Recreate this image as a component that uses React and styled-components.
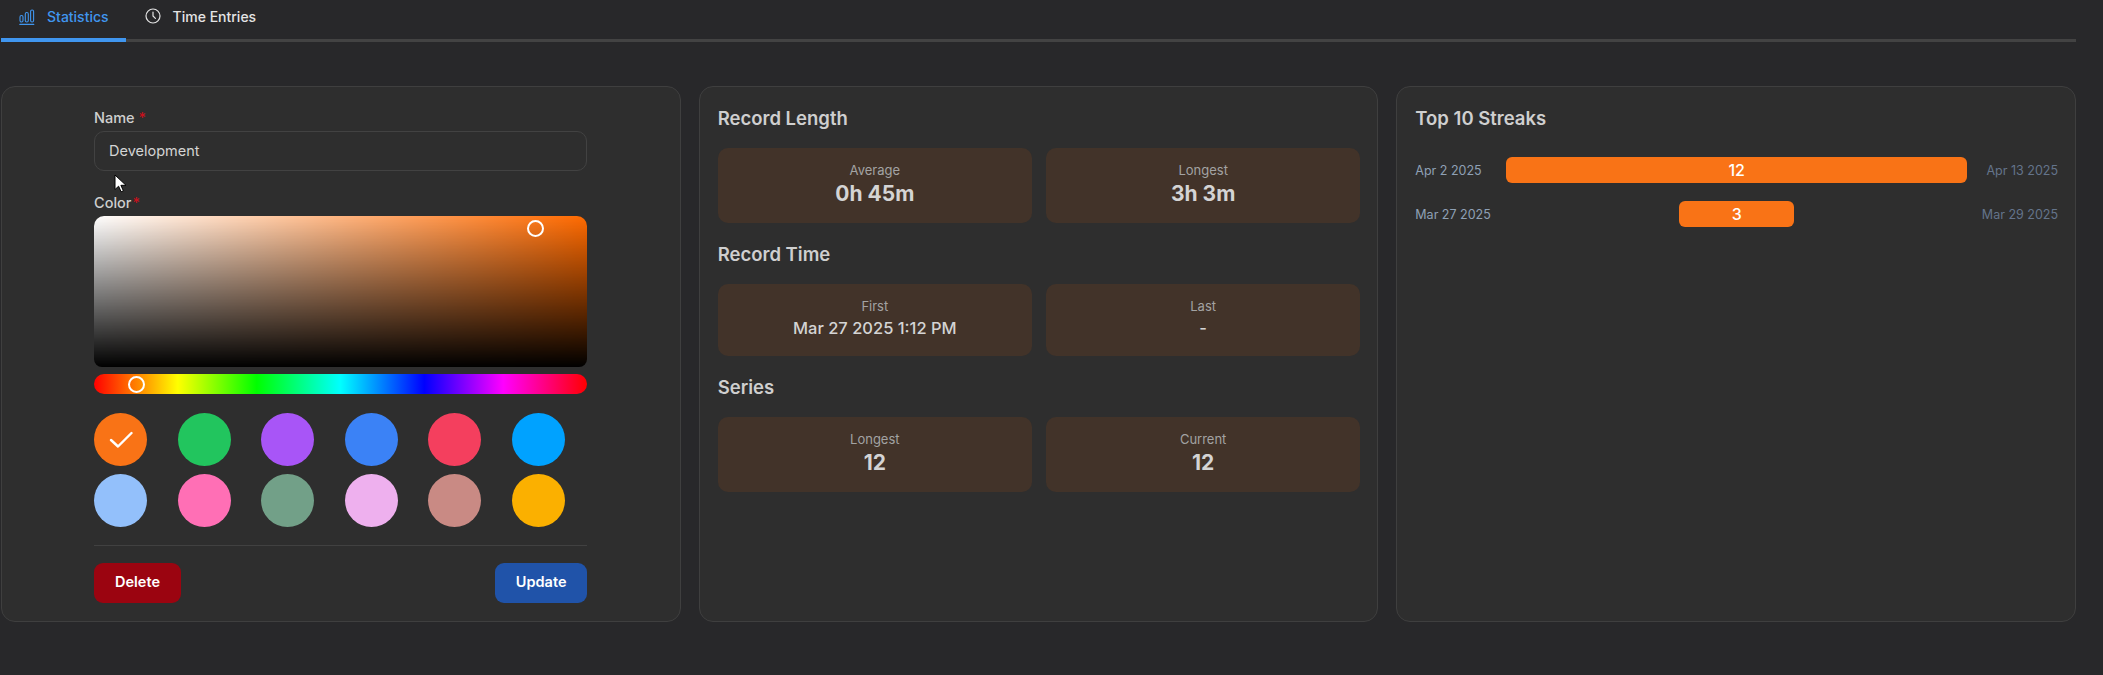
import React from 'react';
import styled, { createGlobalStyle } from 'styled-components';

const GlobalStyle = createGlobalStyle`
  html, body {
    margin: 0;
    background: #28282a;
    color: #d4d4d4;
    font-family: Inter, "Liberation Sans", sans-serif;
  }
  * { box-sizing: border-box; }
`;

const SWATCHES = [
  '#f97316', '#22c55e', '#a855f7', '#3b82f6', '#f43f5e', '#00a2ff',
  '#93c0fb', '#ff6fb5', '#72a088', '#eeb0ee', '#c98a84', '#fbb000',
];

const STREAKS = [
  { from: 'Apr 2 2025', to: 'Apr 13 2025', days: 12 },
  { from: 'Mar 27 2025', to: 'Mar 29 2025', days: 3 },
];

const ChartIcon = () => (
  <svg width="16" height="16" viewBox="0 0 16 16" fill="none" stroke="currentColor" strokeWidth="1.1">
    <rect x="1" y="6.5" width="3" height="6.5" rx="1.4" />
    <rect x="6.3" y="3.5" width="3" height="9.5" rx="1.4" />
    <rect x="11.6" y="1" width="3" height="12" rx="1.4" />
    <path d="M0.8 15.4h14" strokeLinecap="round" />
  </svg>
);

const ClockIcon = () => (
  <svg width="16" height="16" viewBox="0 0 16 16" fill="none" stroke="currentColor" strokeWidth="1.2" strokeLinecap="round" strokeLinejoin="round">
    <circle cx="8" cy="8" r="7" />
    <path d="M8 4v4l2.4 2.4" />
  </svg>
);

const Page = styled.div`
  position: relative;
  width: 2103px;
  height: 675px;
  padding: 0 27px 0 1px;
  overflow: hidden;
`;

const TabBar = styled.div`
  display: flex;
  height: 42px;
  border-bottom: 3px solid #434343;
`;

const Tab = styled.div`
  display: flex;
  align-items: center;
  gap: 12px;
  height: 42px;
  padding: ${(p) => (p.$active ? '0 17px 5px 18px' : '0 18px 10px 19px')};
  font-size: 14px;
  font-weight: 500;
  color: ${(p) => (p.$active ? '#4096ef' : '#e4e4e4')};
  border-bottom: ${(p) => (p.$active ? '4px solid #4096ef' : 'none')};
`;

const Cards = styled.div`
  display: grid;
  grid-template-columns: repeat(3, 1fr);
  gap: 18px;
  margin-top: 44px;
`;

const Card = styled.section`
  background: #2e2e2e;
  border: 1px solid #3f3f3f;
  border-radius: 14px;
  padding: ${(p) => p.$padding || '18px 17px 18px 18px'};
`;

const Label = styled.div`
  font-size: 14.5px;
  line-height: 20px;
  font-weight: 500;
  color: #cfcfcf;
  margin-bottom: 3px;
  span { color: #c8101c; margin-left: ${(p) => p.$starGap ?? 1}px; }
`;

const NameInput = styled.div`
  display: flex;
  align-items: center;
  height: 40px;
  padding: 0 14px 1px;
  margin-bottom: 22px;
  font-size: 14.5px;
  color: #d4d4d4;
  border: 1px solid #424242;
  border-radius: 10px;
`;

const Saturation = styled.div`
  position: relative;
  height: 151px;
  border-radius: 10px 10px 8px 8px;
  background:
    linear-gradient(to top, #000, rgba(0, 0, 0, 0)),
    linear-gradient(to right, #fff, #ff6a00);
`;

const Hue = styled.div`
  position: relative;
  height: 20px;
  margin-top: 7px;
  border-radius: 10px;
  background: linear-gradient(to right, #f00 0%, #ff0 17%, #0f0 33%, #0ff 50%, #00f 67%, #f0f 83%, #f00 100%);
`;

const Thumb = styled.i`
  position: absolute;
  left: ${(p) => p.$x}px;
  top: ${(p) => p.$y}px;
  width: 17px;
  height: 17px;
  border: 2px solid #fff;
  border-radius: 50%;
`;

const SwatchGrid = styled.div`
  display: grid;
  grid-template-columns: repeat(6, 53px);
  column-gap: 30.6px;
  row-gap: 8px;
  margin-top: 19px;
`;

const Swatch = styled.div`
  display: flex;
  align-items: center;
  justify-content: center;
  width: 53px;
  height: 53px;
  border-radius: 50%;
  background: ${(p) => p.$color};
`;

const Divider = styled.hr`
  height: 1px;
  margin: 18px 0 17px;
  border: 0;
  background: #414141;
`;

const Actions = styled.div`
  display: flex;
  justify-content: space-between;
`;

const Button = styled.div`
  display: flex;
  align-items: center;
  justify-content: center;
  width: ${(p) => p.$width}px;
  height: 40px;
  padding-bottom: 3px;
  font-size: 14.5px;
  font-weight: 600;
  color: #fff;
  background: ${(p) => p.$color};
  border-radius: 9px;
`;

const Heading = styled.h3`
  margin: ${(p) => (p.$first ? '0 0 17px' : '18px 0 17px')};
  font-size: 18.5px;
  line-height: 26px;
  font-weight: 600;
  color: #cfcfcf;
`;

const StatRow = styled.div`
  display: grid;
  grid-template-columns: 1fr 1fr;
  gap: 14px;
`;

const StatBox = styled.div`
  display: flex;
  flex-direction: column;
  align-items: center;
  padding: 12px 12px 15px;
  background: #423329;
  border-radius: 10px;
`;

const StatLabel = styled.div`
  font-size: 13px;
  line-height: 20px;
  color: #a3a3a3;
`;

const StatValue = styled.div`
  font-size: ${(p) => (p.$compact ? '16.5px' : '21px')};
  line-height: ${(p) => (p.$compact ? '25px' : '28px')};
  font-weight: ${(p) => (p.$compact ? 500 : 700)};
  color: #d4d4d4;
`;

const StreakList = styled.div`
  display: flex;
  flex-direction: column;
  gap: 18px;
  padding-top: 9px;
`;

const StreakRow = styled.div`
  display: grid;
  grid-template-columns: 91px 1fr 91px;
  align-items: center;
  height: 26px;
`;

const StreakDate = styled.div`
  font-size: 12.5px;
  color: ${(p) => (p.$end ? '#64748b' : '#8ea0b5')};
  text-align: ${(p) => (p.$end ? 'right' : 'left')};
`;

const Track = styled.div`
  display: flex;
  justify-content: center;
`;

const Bar = styled.div`
  height: 26px;
  line-height: 26px;
  text-align: center;
  font-size: 16px;
  font-weight: 500;
  color: #fff;
  background: #f97316;
  border-radius: 6px;
`;

const Cursor = styled.svg`
  position: absolute;
  left: 114px;
  top: 174px;
`;

const Stat = ({ label, value, compact }) => (
  <StatBox>
    <StatLabel>{label}</StatLabel>
    <StatValue $compact={compact}>{value}</StatValue>
  </StatBox>
);

export default function App() {
  const maxDays = Math.max(...STREAKS.map((s) => s.days));

  return (
    <Page>
      <GlobalStyle />
      <TabBar>
        <Tab $active><ChartIcon />Statistics</Tab>
        <Tab><ClockIcon />Time Entries</Tab>
      </TabBar>

      <Cards>
        <Card $padding="21px 92.5px 18px 92px">
          <Label $starGap={0}>Name <span>*</span></Label>
          <NameInput>Development</NameInput>
          <Label>Color<span>*</span></Label>
          <Saturation>
            <Thumb $x={433} $y={4} />
          </Saturation>
          <Hue>
            <Thumb $x={33.5} $y={1.5} />
          </Hue>
          <SwatchGrid>
            {SWATCHES.map((color, i) => (
              <Swatch key={color} $color={color}>
                {i === 0 && (
                  <svg width="24" height="18" viewBox="0 0 24 18" fill="none" stroke="#fff" strokeWidth="2.4" strokeLinecap="round" strokeLinejoin="round">
                    <path d="M2 9l7 6.5L22.5 2" />
                  </svg>
                )}
              </Swatch>
            ))}
          </SwatchGrid>
          <Divider />
          <Actions>
            <Button $width={87} $color="#9b0410">Delete</Button>
            <Button $width={92} $color="#2053a9">Update</Button>
          </Actions>
        </Card>

        <Card>
          <Heading $first>Record Length</Heading>
          <StatRow>
            <Stat label="Average" value="0h 45m" />
            <Stat label="Longest" value="3h 3m" />
          </StatRow>
          <Heading>Record Time</Heading>
          <StatRow>
            <Stat compact label="First" value="Mar 27 2025 1:12 PM" />
            <Stat compact label="Last" value="-" />
          </StatRow>
          <Heading>Series</Heading>
          <StatRow>
            <Stat label="Longest" value="12" />
            <Stat label="Current" value="12" />
          </StatRow>
        </Card>

        <Card>
          <Heading $first>Top 10 Streaks</Heading>
          <StreakList>
            {STREAKS.map((s) => (
              <StreakRow key={s.from}>
                <StreakDate>{s.from}</StreakDate>
                <Track>
                  <Bar style={{ width: `${(s.days / maxDays) * 100}%` }}>{s.days}</Bar>
                </Track>
                <StreakDate $end>{s.to}</StreakDate>
              </StreakRow>
            ))}
          </StreakList>
        </Card>
      </Cards>

      <Cursor width="13" height="19" viewBox="0 0 13 19">
        <path d="M1 1v14.5l3.6-3.3 2.5 5.6 2.3-1-2.5-5.5H12z" fill="#fff" stroke="#000" strokeWidth="1" />
      </Cursor>
    </Page>
  );
}
